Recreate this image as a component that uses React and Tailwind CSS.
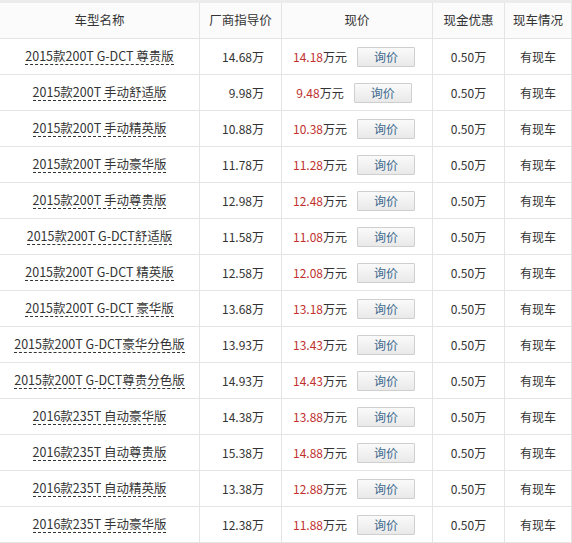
import React from "react";

const rows = [
  ["2015款200T G-DCT 尊贵版", "14.68万", "14.18"],
  ["2015款200T 手动舒适版", "9.98万", "9.48"],
  ["2015款200T 手动精英版", "10.88万", "10.38"],
  ["2015款200T 手动豪华版", "11.78万", "11.28"],
  ["2015款200T 手动尊贵版", "12.98万", "12.48"],
  ["2015款200T G-DCT舒适版", "11.58万", "11.08"],
  ["2015款200T G-DCT 精英版", "12.58万", "12.08"],
  ["2015款200T G-DCT 豪华版", "13.68万", "13.18"],
  ["2015款200T G-DCT豪华分色版", "13.93万", "13.43"],
  ["2015款200T G-DCT尊贵分色版", "14.93万", "14.43"],
  ["2016款235T 自动豪华版", "14.38万", "13.88"],
  ["2016款235T 自动尊贵版", "15.38万", "14.88"],
  ["2016款235T 自动精英版", "13.38万", "12.88"],
  ["2016款235T 手动豪华版", "12.38万", "11.88"],
];

const cell = "flex items-center justify-center border-b border-r border-[#e4e4e4]";

export default function App() {
  return (
    <div
      className="w-[572px] h-[543px] overflow-hidden bg-white border-t-[3px] border-[#ececec] text-[12px] text-[#333]"
      style={{ fontFamily: '"Noto Sans CJK SC", "Noto Sans", sans-serif' }}
    >
      <div className="grid grid-cols-[200px_82px_151px_72px_67px]">
        {["车型名称", "厂商指导价", "现价", "现金优惠", "现车情况"].map((h) => (
          <div key={h} className={`${cell} h-[36px] bg-[#fbfbfb] text-[12.5px]`}>
            {h}
          </div>
        ))}
        {rows.map(([name, guide, price]) => (
          <React.Fragment key={name}>
            <div className={`${cell} h-[36px]`}>
              <span className="border-b border-dashed border-[#333] leading-[16px] text-[12.5px]">{name}</span>
            </div>
            <div className={`${cell} h-[36px] justify-end pr-[17px]`}>{guide}</div>
            <div className={`${cell} h-[36px] gap-[10px] pr-[6px]`}>
              <span>
                <span className="text-[#c0312f]">{price}</span>万元
              </span>
              <span className="flex items-center justify-center w-[58px] h-[20px] border border-[#cfcfcf] bg-gradient-to-b from-[#fafafa] to-[#e9e9e9] text-[#3d6a8e] rounded-[1px]">
                询价
              </span>
            </div>
            <div className={`${cell} h-[36px]`}>0.50万</div>
            <div className={`${cell} h-[36px]`}>有现车</div>
          </React.Fragment>
        ))}
      </div>
    </div>
  );
}
